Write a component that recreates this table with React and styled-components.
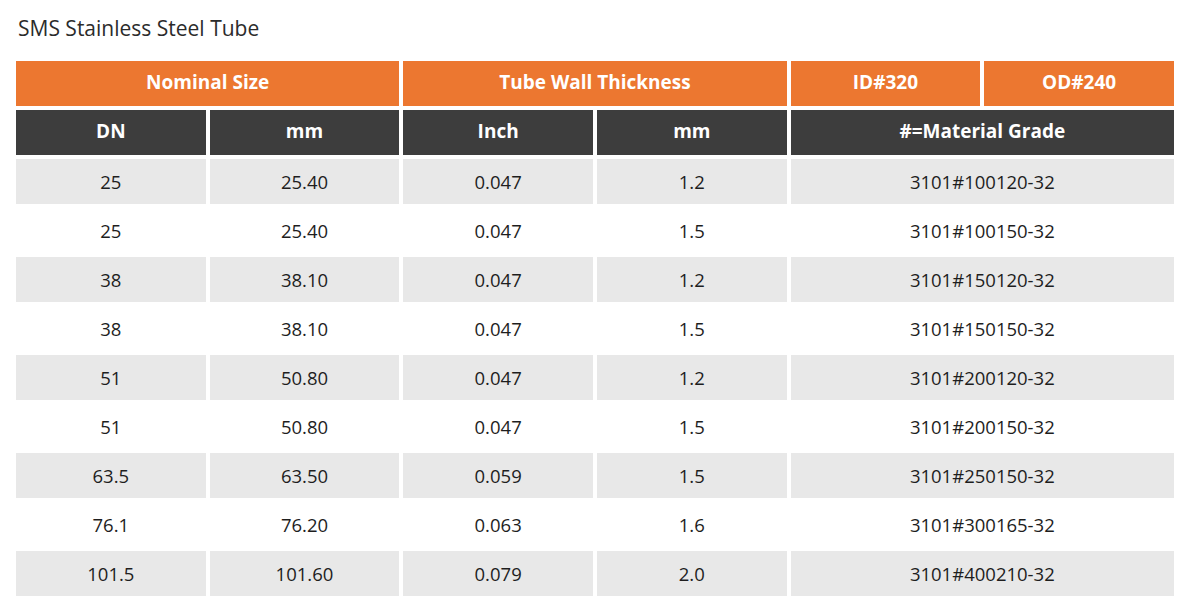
import React from "react";
import styled, { createGlobalStyle } from "styled-components";

const GlobalStyle = createGlobalStyle`
    body {
        margin: 0;
        background: #ffffff;
        font-family: "Open Sans", "Liberation Sans", sans-serif;
    }
`;

const rows = [
    ["25", "25.40", "0.047", "1.2", "3101#100120-32"],
    ["25", "25.40", "0.047", "1.5", "3101#100150-32"],
    ["38", "38.10", "0.047", "1.2", "3101#150120-32"],
    ["38", "38.10", "0.047", "1.5", "3101#150150-32"],
    ["51", "50.80", "0.047", "1.2", "3101#200120-32"],
    ["51", "50.80", "0.047", "1.5", "3101#200150-32"],
    ["63.5", "63.50", "0.059", "1.5", "3101#250150-32"],
    ["76.1", "76.20", "0.063", "1.6", "3101#300165-32"],
    ["101.5", "101.60", "0.079", "2.0", "3101#400210-32"],
];

const App = () => {
    return (
        <>
            <GlobalStyle />
            <Page>
                <Title>SMS Stainless Steel Tube</Title>
                <Table>
                    <colgroup>
                        <col /><col /><col /><col /><col /><col />
                    </colgroup>
                    <thead>
                        <tr>
                            <GroupHead colSpan={2}>Nominal Size</GroupHead>
                            <GroupHead colSpan={2}>Tube Wall Thickness</GroupHead>
                            <GroupHead>ID#320</GroupHead>
                            <GroupHead>OD#240</GroupHead>
                        </tr>
                        <tr>
                            <SubHead>DN</SubHead>
                            <SubHead>mm</SubHead>
                            <SubHead>Inch</SubHead>
                            <SubHead>mm</SubHead>
                            <SubHead colSpan={2}>#=Material Grade</SubHead>
                        </tr>
                    </thead>
                    <tbody>
                        {rows.map((row, i) => (
                            <tr key={i}>
                                {row.map((val, j) => (
                                    <Cell key={j} $shade={i % 2 === 0} colSpan={j === 4 ? 2 : 1}>
                                        {val}
                                    </Cell>
                                ))}
                            </tr>
                        ))}
                    </tbody>
                </Table>
            </Page>
        </>
    );
};

const Page = styled.div`
    padding: 14px 13px 0 12px;
`;
const Title = styled.h2`
    margin: 0 0 15px 6px;
    font-size: 21px;
    font-weight: 400;
    line-height: 28px;
    color: #2b2b2b;
`;
const Table = styled.table`
    width: 1166px;
    table-layout: fixed;
    border-collapse: separate;
    border-spacing: 4px;
    margin: 0;
`;
const BaseCell = styled.td`
    height: 45px;
    padding: 0;
    text-align: center;
    vertical-align: middle;
    box-sizing: border-box;
`;
const GroupHead = styled(BaseCell).attrs({ as: "th" })`
    background: #ec7730;
    color: #ffffff;
    font-size: 19px;
    font-weight: 700;
    padding-bottom: 4px;
`;
const SubHead = styled(BaseCell).attrs({ as: "th" })`
    background: #3d3d3d;
    color: #ffffff;
    font-size: 19px;
    font-weight: 700;
    padding-bottom: 3px;
`;
const Cell = styled(BaseCell)`
    background: ${(p) => (p.$shade ? "#e8e8e8" : "#ffffff")};
    color: #1e1e1e;
    font-size: 18.5px;
    font-weight: 400;
`;

export default App;
